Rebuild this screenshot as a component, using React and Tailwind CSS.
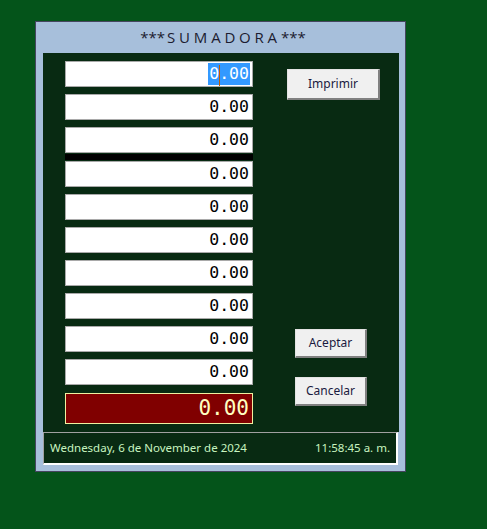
import React from "react";

const mono = { fontFamily: '"DejaVu Sans Mono", "Liberation Mono", monospace' };

function Field({ first }) {
  return (
    <div className="h-[26px] w-[188px] bg-white border border-[#a9a9a9] flex items-center justify-end pr-[2px]">
      {first ? (
        <span className="relative bg-[#3399ff] text-white text-[16.5px] leading-[22px] px-[1px]" style={mono}>
          0.00
          <span className="absolute left-[11px] top-[2px] w-[1px] h-[21px] bg-[#c05a00]" />
        </span>
      ) : (
        <span className="text-black text-[16.5px] leading-[22px] px-[1px]" style={mono}>0.00</span>
      )}
    </div>
  );
}

function Btn({ children, className }) {
  return (
    <div
      className={
        "flex items-center justify-center bg-[#f0f0f0] border-t border-l border-[#e3e3e3] border-r-2 border-b-2 border-r-[#808080] border-b-[#808080] text-[12px] text-[#1a1a40] " +
        className
      }
      style={{ fontFamily: '"Noto Sans", "Open Sans", sans-serif' }}
    >
      {children}
    </div>
  );
}

export default function App() {
  return (
    <div className="w-[487px] h-[529px] bg-[#04541a] pt-[21px] pl-[35px]">
      <div className="w-[371px] h-[451px] border border-[#45455f] bg-[#a7bfdb] flex flex-col pl-[7px] pr-[6px]">
        <div
          className="h-[31px] flex items-center justify-center text-[15px] text-[#1c1c30] pl-[4px]"
          style={{ fontFamily: '"Open Sans", "Noto Sans", sans-serif' }}
        >
          <span>***</span>
          <span className="tracking-[3.8px] ml-[2px]">SUMADORA</span>
          <span>***</span>
        </div>
        <div className="h-[379px] bg-[#082a12] flex pl-[22px] pt-[8px]">
          <div className="flex flex-col w-[188px]">
            <Field first />
            <div className="mt-[7px]"><Field /></div>
            <div className="mt-[7px]"><Field /></div>
            <div className="h-[6px] bg-black mt-px" />
            <div className="mt-px"><Field /></div>
            <div className="mt-[7px]"><Field /></div>
            <div className="mt-[7px]"><Field /></div>
            <div className="mt-[7px]"><Field /></div>
            <div className="mt-[7px]"><Field /></div>
            <div className="mt-[7px]"><Field /></div>
            <div className="mt-[7px]"><Field /></div>
            <div className="mt-[8px] h-[31px] bg-[#800000] border border-[#f0f0a0] flex items-center justify-end pr-[3px]">
              <span className="text-[21px] text-[#ffffc0] leading-none" style={mono}>0.00</span>
            </div>
          </div>
          <div className="flex flex-col ml-[34px] mt-[8px]">
            <Btn className="w-[93px] h-[31px]">Imprimir</Btn>
            <Btn className="w-[72px] h-[29px] ml-[8px] mt-[229px]">Aceptar</Btn>
            <Btn className="w-[72px] h-[29px] ml-[8px] mt-[19px]">Cancelar</Btn>
          </div>
        </div>
        <div
          className="h-[33px] w-[355px] bg-[#082a12] border-t border-l border-[#a0a0a0] border-r-2 border-b-2 border-r-white border-b-white flex items-center justify-between pl-[6px] pr-[6px] text-[11.5px] text-[#c8f5c0]"
          style={{ fontFamily: '"Noto Sans", "Open Sans", sans-serif' }}
        >
          <span>Wednesday, 6 de November de 2024</span>
          <span>11:58:45 a. m.</span>
        </div>
      </div>
    </div>
  );
}
